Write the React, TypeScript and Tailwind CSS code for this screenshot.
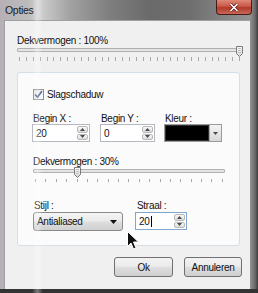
import React from "react";

function Ticks({ count, className }: { count: number; className: string }) {
  return (
    <div className={`flex justify-between ${className}`}>
      {Array.from({ length: count }).map((_, i) => (
        <div key={i} className="w-px h-full bg-[#a8a8a8]" />
      ))}
    </div>
  );
}

function Thumb({ className }: { className: string }) {
  return (
    <svg className={className} width="7" height="11" viewBox="0 0 7 11">
      <defs>
        <linearGradient id="tg" x1="0" y1="0" x2="0" y2="1">
          <stop offset="0" stopColor="#fbfbfb" />
          <stop offset="1" stopColor="#d6d6d6" />
        </linearGradient>
      </defs>
      <path d="M0.5 0.5 H6.5 V7.5 L3.5 10.5 L0.5 7.5 Z" fill="url(#tg)" stroke="#7a7a7a" />
      <path d="M2 2.5 H5 M2 4.5 H5 M2 6.5 H5" stroke="#c0c0c0" />
    </svg>
  );
}

function Spinner() {
  return (
    <div className="absolute right-[1px] top-[1px] bottom-[1px] w-[11px] flex flex-col gap-px">
      <div className="flex-1 rounded-[2px] border border-[#b8b8b8] bg-[linear-gradient(#f8f8f8,#dcdcdc)] flex items-center justify-center">
        <svg width="5" height="3" viewBox="0 0 5 3">
          <path d="M0 3 L2.5 0 L5 3 Z" fill="#4a4a4a" />
        </svg>
      </div>
      <div className="flex-1 rounded-[2px] border border-[#b8b8b8] bg-[linear-gradient(#f8f8f8,#dcdcdc)] flex items-center justify-center">
        <svg width="5" height="3" viewBox="0 0 5 3">
          <path d="M0 0 L2.5 3 L5 0 Z" fill="#4a4a4a" />
        </svg>
      </div>
    </div>
  );
}

function SpinInput({ value, width, focused }: { value: string; width: string; focused?: boolean }) {
  return (
    <div
      className={`relative h-[18px] ${width} bg-white border ${
        focused ? "border-[#7fa8d0]" : "border-[#b5b8c0]"
      } flex items-center pl-[3px]`}
    >
      <span className="leading-[11px]">{value}</span>
      {focused && <span className="w-px h-[11px] bg-black ml-px" />}
      <Spinner />
    </div>
  );
}

export default function App() {
  return (
    <div className="relative w-[258px] h-[293px] overflow-hidden flex flex-col text-[10px] tracking-[-0.3px] text-[#111111] font-['Liberation_Sans',Arial,sans-serif] bg-[linear-gradient(90deg,#b6b0b6_0px,#bcbcbc_28px,#cfcfcf_40px,#a2a2a2_70px,#7e7e7e_110px,#6a6a6a_150px,#6e6e6e_190px,#888888_230px,#929292_250px,#6a6a6a_255px,#3c3c3c_258px)]">
      {/* title bar */}
      <div className="h-[20px] flex items-start shrink-0">
        <span className="pl-[5px] pt-[4px] leading-[12px] text-[10.5px] text-[#1a1a1a]">Opties</span>
        <div className="ml-auto mr-[6px] w-[36px] h-[15px] rounded-b-[4px] border border-t-0 border-[#4a1a1a] bg-[linear-gradient(#e08878,#c85848_45%,#b03a2a_55%,#c86858)] flex items-center justify-center">
          <svg width="10" height="9" viewBox="0 0 10 9">
            <path d="M1.5 1 L8.5 8 M8.5 1 L1.5 8" stroke="#5a1a1a" strokeWidth="3" />
            <path d="M1.5 1 L8.5 8 M8.5 1 L1.5 8" stroke="#ffffff" strokeWidth="1.6" />
          </svg>
        </div>
      </div>

      {/* client area */}
      <div className="ml-[4px] mr-[8px] h-[269px] shrink-0 bg-[#f0f0f0] border-l border-t border-[#a0a0a0] flex flex-col">
        <div className="mt-[14px] ml-[12px] leading-[11px] h-[11px]">Dekvermogen : 100%</div>
        <div className="relative ml-[12px] w-[225px] h-[10px]">
          <div className="mt-[2px] h-[4px] border border-[#b0b0b0] bg-[#e4e4e4] rounded-[1px]" />
          <Thumb className="absolute left-[219px] top-0" />
        </div>
        <Ticks count={33} className="mt-[1px] ml-[14px] w-[221px] h-[4px]" />

        {/* group box */}
        <div className="mt-[11px] ml-[12px] w-[223px] h-[174px] border border-[#d5dfe5] rounded-[3px] bg-[#fbfbfb] flex flex-col">
          <div className="mt-[16px] ml-[15px] h-[11px] flex items-center">
            <div className="w-[11px] h-[11px] border border-[#8f8f8f] bg-[linear-gradient(135deg,#dcdcdc,#ffffff)] flex items-center justify-center">
              <svg width="9" height="9" viewBox="0 0 9 9">
                <path d="M1.2 4.6 L3.5 7.2 L7.8 1.2" fill="none" stroke="#3c5a8c" strokeWidth="1.6" />
              </svg>
            </div>
            <span className="ml-[3px] leading-[11px]">Slagschaduw</span>
          </div>

          <div className="mt-[13px] ml-[14px] flex">
            <div className="flex flex-col w-[58px]">
              <span className="pl-px leading-[11px] h-[11px]">Begin X :</span>
              <SpinInput value="20" width="w-[58px]" />
            </div>
            <div className="flex flex-col w-[55px] ml-[10px]">
              <span className="pl-px leading-[11px] h-[11px]">Begin Y :</span>
              <SpinInput value="0" width="w-[55px]" />
            </div>
            <div className="flex flex-col w-[58px] ml-[9px]">
              <span className="pl-px leading-[11px] h-[11px]">Kleur :</span>
              <div className="h-[18px] w-[58px] border border-[#9a9a9a] bg-[#e8e8e8] flex">
                <div className="flex-1 bg-black border border-[#303030]" />
                <div className="w-[12px] bg-[linear-gradient(#f4f4f4,#d8d8d8)] border-l border-[#a8a8a8] flex items-center justify-center">
                  <svg width="5" height="3" viewBox="0 0 5 3">
                    <path d="M0 0 L2.5 3 L5 0 Z" fill="#4a4a4a" />
                  </svg>
                </div>
              </div>
            </div>
          </div>

          <div className="mt-[14px] ml-[15px] leading-[11px] h-[11px]">Dekvermogen : 30%</div>
          <div className="relative ml-[15px] w-[192px] h-[11px]">
            <div className="mt-[2px] h-[4px] border border-[#b0b0b0] bg-[#e4e4e4] rounded-[1px]" />
            <Thumb className="absolute left-[41px] top-0" />
          </div>
          <Ticks count={19} className="mt-[1px] ml-[17px] w-[188px] h-[3px]" />

          <div className="mt-[18px] ml-[15px] flex">
            <div className="flex flex-col w-[90px]">
              <span className="pl-px leading-[11px] h-[11px]">Stijl :</span>
              <div className="mt-px h-[19px] w-[90px] rounded-[3px] border border-[#8a8a8a] bg-[linear-gradient(#f4f4f4,#ebebeb_45%,#dddddd_55%,#d0d0d0)] flex items-center pl-[3px] pr-[5px]">
                <span className="leading-[11px]">Antialiased</span>
                <svg className="ml-auto" width="7" height="4" viewBox="0 0 7 4">
                  <path d="M0 0 L3.5 4 L7 0 Z" fill="#111" />
                </svg>
              </div>
            </div>
            <div className="flex flex-col w-[52px] ml-[12px]">
              <span className="pl-[2px] leading-[11px] h-[11px]">Straal :</span>
              <div className="mt-px">
                <SpinInput value="20" width="w-[52px]" focused />
              </div>
            </div>
          </div>
        </div>

        {/* buttons */}
        <div className="mt-[11px] mr-[8px] flex justify-end gap-[11px]">
          <div className="w-[59px] h-[20px] rounded-[3px] border border-[#707070] bg-[linear-gradient(#f2f2f2,#ebebeb_45%,#dddddd_55%,#cfcfcf)] flex items-center justify-center leading-[11px]">
            Ok
          </div>
          <div className="w-[58px] h-[20px] rounded-[3px] border border-[#707070] bg-[linear-gradient(#f2f2f2,#ebebeb_45%,#dddddd_55%,#cfcfcf)] flex items-center justify-center leading-[11px]">
            Annuleren
          </div>
        </div>
      </div>

      <div className="flex-1 bg-[#333333]" />

      {/* glare streak overlay */}
      <div className="pointer-events-none absolute left-[32px] top-0 bottom-0 w-[11px] bg-[linear-gradient(90deg,rgba(255,255,255,0),rgba(255,255,255,0.35),rgba(255,255,255,0))]" />

      {/* mouse cursor */}
      <svg className="absolute left-[127px] top-[231px]" width="12" height="20" viewBox="0 0 12 20">
        <path d="M0.5 0.5 L0.5 15.5 L4 12 L6.5 18 L9 17 L6.5 11 L11.5 11 Z" fill="#111" stroke="#ffffff" strokeWidth="1" strokeLinejoin="round" />
      </svg>
    </div>
  );
}
